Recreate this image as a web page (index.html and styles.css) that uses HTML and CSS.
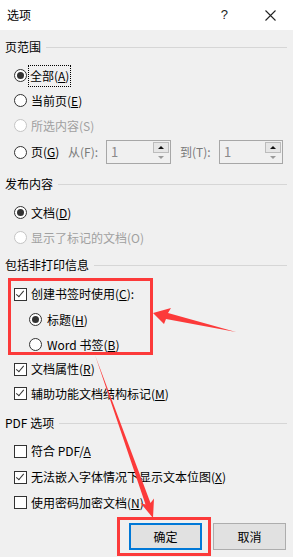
FILE: index.html
```html
<!DOCTYPE html>
<html lang="zh-CN">
<head>
    <meta charset="UTF-8">
    <meta name="viewport" content="width=device-width, initial-scale=1.0">
    <title>选项</title>
    <link rel="stylesheet" href="styles.css">
</head>
<body>
    <div class="titlebar">
        <span class="title">选项</span>
        <span class="help">?</span>
        <svg class="close" width="11" height="11" viewBox="0 0 11 11">
            <path d="M0.5 0.5 L10.5 10.5 M10.5 0.5 L0.5 10.5" stroke="#222" stroke-width="1.1" fill="none"/>
        </svg>
    </div>

    <main class="content">
        <fieldset class="group g-range">
            <legend>页范围</legend>
            <div class="rows">
                <div class="row"><span class="radio on"></span><span class="label focus">全部(<u>A</u>)</span></div>
                <div class="row"><span class="radio"></span><span class="label">当前页(<u>E</u>)</span></div>
                <div class="row disabled"><span class="radio"></span><span class="label">所选内容(S)</span></div>
                <div class="row page-row">
                    <span class="radio"></span>
                    <span class="label page-label">页(<u>G</u>)</span>
                    <span class="spin-label from">从(F):</span>
                    <div class="spin s-from">
                        <span class="val">1</span>
                        <div class="spin-btns"><span class="up"></span><span class="down"></span></div>
                    </div>
                    <span class="spin-label to">到(T):</span>
                    <div class="spin s-to">
                        <span class="val">1</span>
                        <div class="spin-btns"><span class="up"></span><span class="down"></span></div>
                    </div>
                </div>
            </div>
        </fieldset>

        <fieldset class="group g-publish">
            <legend>发布内容</legend>
            <div class="rows">
                <div class="row"><span class="radio on"></span><span class="label">文档(<u>D</u>)</span></div>
                <div class="row disabled"><span class="radio"></span><span class="label">显示了标记的文档(O)</span></div>
            </div>
        </fieldset>

        <fieldset class="group g-info">
            <legend>包括非打印信息</legend>
            <div class="rows">
                <div class="row tall"><span class="check on"></span><span class="label">创建书签时使用(<u>C</u>):</span></div>
                <div class="row sub"><span class="radio on"></span><span class="label">标题(<u>H</u>)</span></div>
                <div class="row sub"><span class="radio"></span><span class="label">Word 书签(<u>B</u>)</span></div>
                <div class="row short"><span class="check on"></span><span class="label">文档属性(<u>R</u>)</span></div>
                <div class="row"><span class="check on"></span><span class="label">辅助功能文档结构标记(<u>M</u>)</span></div>
            </div>
        </fieldset>

        <fieldset class="group g-pdf">
            <legend>PDF 选项</legend>
            <div class="rows">
                <div class="row tall"><span class="check"></span><span class="label">符合 PDF/<u>A</u></span></div>
                <div class="row tall"><span class="check on"></span><span class="label">无法嵌入字体情况下显示文本位图(<u>X</u>)</span></div>
                <div class="row"><span class="check"></span><span class="label">使用密码加密文档(<u>N</u>)</span></div>
            </div>
        </fieldset>

        <div class="buttons">
            <button class="btn primary">确定</button>
            <button class="btn">取消</button>
        </div>
    </main>

    <!-- red annotation marks drawn over the dialog -->
    <svg class="marks" width="293" height="557" viewBox="0 0 293 557">
        <rect x="9.5" y="279.5" width="142" height="74" fill="none" stroke="#fc3a3a" stroke-width="3"/>
        <rect x="118.5" y="518.5" width="91" height="36" fill="none" stroke="#fc3a3a" stroke-width="3"/>
        <path d="M153 313 L171 308 L168 313 L236 332 L166 319 L164 324 Z" fill="#fc3a3a"/>
        <path d="M153 518 L140.5 503 L145.5 504.5 L95 355 L150.5 503 L154 498.5 Z" fill="#fc3a3a"/>
    </svg>
</body>
</html>
```

FILE: styles.css
```css
body {
    margin: 0;
    width: 293px;
    height: 557px;
    overflow: hidden;
    position: relative;
    background-color: #f0f0f0;
    color: #000;
    font-family: "Noto Sans CJK SC", "Noto Sans", sans-serif;
    font-size: 12px;
    line-height: 16px;
}

u {
    text-decoration: underline;
    text-underline-offset: 1px;
}

.titlebar {
    height: 30px;
    background-color: #fff;
    display: flex;
    align-items: center;
    padding-left: 7px;
}

.titlebar .title {
    font-size: 12px;
    flex: 1;
}

.titlebar .help {
    font-family: "Liberation Sans", sans-serif;
    font-size: 13px;
    margin-right: 37px;
    color: #222;
}

.titlebar .close {
    margin-right: 17px;
}

.content {
    padding-top: 9px;
}

/* group box: only the top rule, broken by the legend */
.group {
    border: 0;
    border-top: 1px solid #d6d6d6;
    margin: 0 6px 0 5px;
    padding: 0;
    min-width: 0;
}

.group legend {
    padding: 0 5px 0 0;
    margin: 0;
    height: 16px;
    line-height: 16px;
}

.rows {
    padding-top: 8px;
}

.g-pdf .rows {
    padding-top: 7px;
}

/* group spacing tuned per section */
.g-range {
    margin-bottom: 10px;
}

.g-publish {
    margin-bottom: 7px;
}

.g-info {
    margin-bottom: 9px;
}

.g-pdf {
    margin-bottom: 8px;
}

.row {
    display: flex;
    align-items: center;
    height: 25px;
    padding-left: 9px;
}

.row.tall {
    height: 26px;
}

.row.short {
    height: 24px;
}

.row.sub {
    padding-left: 24px;
}

.row.sub .label {
    margin-left: 5px;
}

.label {
    margin-left: 4px;
    white-space: nowrap;
}

.label.focus {
    outline: 1px dotted #000;
    outline-offset: 0;
    padding: 2px 1px;
    margin-left: 2px;
}

.radio {
    width: 11px;
    height: 11px;
    border: 1px solid #333;
    border-radius: 50%;
    background-color: #fff;
    position: relative;
    flex: none;
}

.radio.on::after {
    content: "";
    position: absolute;
    left: 2px;
    top: 2px;
    width: 7px;
    height: 7px;
    border-radius: 50%;
    background-color: #333;
}

.check {
    width: 11px;
    height: 11px;
    border: 1px solid #333;
    background-color: #fff;
    position: relative;
    flex: none;
}

.check.on::after {
    content: "";
    position: absolute;
    left: 3px;
    top: 0px;
    width: 3px;
    height: 7px;
    border-right: 1px solid #333;
    border-bottom: 1px solid #333;
    transform: rotate(40deg);
}

.disabled .label {
    color: #a0a0a0;
}

.disabled .radio {
    border-color: #c4c4c4;
}

.page-row {
    height: 28px;
}

.page-label {
    width: 37px;
}

.spin-label {
    color: #7a7a7a;
    white-space: nowrap;
}

.spin-label.from {
    width: 38px;
}

.spin-label.to {
    width: 39px;
    margin-left: 9px;
}

.spin {
    height: 24px;
    border: 1px solid #a7a7a7;
    box-sizing: border-box;
    display: flex;
    background-color: #f0f0f0;
}

.s-from {
    width: 65px;
}

.s-to {
    width: 64px;
}

.spin .val {
    flex: 1;
    padding-left: 4px;
    line-height: 22px;
    color: #8a8a8a;
    font-size: 13px;
}

.spin-btns {
    width: 16px;
    display: flex;
    flex-direction: column;
    padding: 1px 1px 1px 0;
    gap: 1px;
}

.spin-btns span {
    flex: 1;
    display: flex;
    align-items: center;
    justify-content: center;
}

.spin-btns .up {
    background-color: #e6e6e6;
    border: 1px solid #bcbcbc;
}

.spin-btns .up::after {
    content: "";
    border-left: 3px solid transparent;
    border-right: 3px solid transparent;
    border-bottom: 3px solid #111;
}

.spin-btns .down::after {
    content: "";
    border-left: 3px solid transparent;
    border-right: 3px solid transparent;
    border-top: 3px solid #9a9a9a;
}

.buttons {
    display: flex;
    justify-content: flex-end;
    gap: 11px;
    padding-right: 7px;
}

.btn {
    width: 73px;
    height: 27px;
    border: 1px solid #adadad;
    background-color: #e1e1e1;
    font-family: "Noto Sans CJK SC", sans-serif;
    font-size: 12px;
    color: #000;
    padding: 0;
}

.btn.primary {
    border: 2px solid #0078d7;
}

.marks {
    position: absolute;
    left: 0;
    top: 0;
    pointer-events: none;
}
```
